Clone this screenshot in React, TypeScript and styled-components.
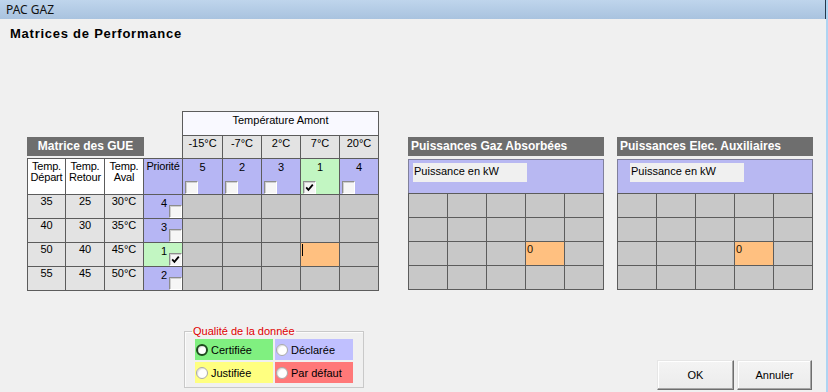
import { Fragment } from 'react';
import styled, { createGlobalStyle } from 'styled-components';

const GlobalStyle = createGlobalStyle`
  html, body {
    margin: 0;
    padding: 0;
    background: #f0f0f0;
  }
  body {
    font-family: 'Liberation Sans', Arial, sans-serif;
    font-size: 11px;
    color: #000;
  }
`;

const tones = {
  white: '#ffffff',
  pale: '#f9f9ff',
  light: '#e3e3e3',
  gray: '#c8c8c8',
  blue: '#b6b6f4',
  green: '#c2f6c2',
  orange: '#ffc080',
};
type Tone = keyof typeof tones;

const quality = {
  green: '#80f080',
  blue: '#c0c0ff',
  yellow: '#ffff80',
  red: '#ff7878',
};

const gueRows = [
  { dep: '35', ret: '25', aval: '30°C', prio: 4 },
  { dep: '40', ret: '30', aval: '35°C', prio: 3 },
  { dep: '50', ret: '40', aval: '45°C', prio: 1, checked: true },
  { dep: '55', ret: '45', aval: '50°C', prio: 2 },
];

const temps = [
  { label: '-15°C', prio: 5 },
  { label: '-7°C', prio: 2 },
  { label: '2°C', prio: 3 },
  { label: '7°C', prio: 1, checked: true },
  { label: '20°C', prio: 4 },
];

const Window = styled.div`
  box-sizing: border-box;
  width: 828px;
  height: 392px;
  display: flex;
  flex-direction: column;
  border-right: 2px solid #aed4f2;
  overflow: hidden;
`;

const TitleBar = styled.div`
  flex: none;
  height: 19px;
  padding-left: 6px;
  background: linear-gradient(#bfd5ec, #a9c3df);
  border-right: 1px solid #26384a;
  font-family: 'Noto Sans', 'Open Sans', sans-serif;
  font-size: 12px;
  line-height: 19px;
  color: #111;
`;

const Heading = styled.h1`
  margin: 0;
  padding: 7px 0 0 10px;
  font-size: 13px;
  line-height: 16px;
  font-weight: bold;
  letter-spacing: 0.75px;
`;

const Board = styled.div`
  display: flex;
  align-items: flex-start;
  height: 180px;
  margin-top: 69px;
  padding-left: 27px;
`;

const Block = styled.div<{ $top?: number; $left?: number }>`
  display: flex;
  flex-direction: column;
  margin-top: ${(p) => p.$top ?? 0}px;
  margin-left: ${(p) => p.$left ?? 0}px;
`;

const Banner = styled.div<{ $width?: number; $gap: number; $center?: boolean }>`
  box-sizing: border-box;
  height: 19px;
  width: ${(p) => (p.$width ? `${p.$width}px` : 'auto')};
  margin-bottom: ${(p) => p.$gap}px;
  padding-left: ${(p) => (p.$center ? 0 : 3)}px;
  background: #6e6e6e;
  color: #fff;
  font-size: 12px;
  font-weight: bold;
  line-height: 19px;
  text-align: ${(p) => (p.$center ? 'center' : 'left')};
  white-space: nowrap;
`;

const Grid = styled.div<{ $cols: string; $rows: string; $open?: boolean }>`
  display: grid;
  grid-template-columns: ${(p) => p.$cols};
  grid-template-rows: ${(p) => p.$rows};
  gap: 1px;
  padding: ${(p) => (p.$open ? '1px 0 1px 1px' : '1px')};
  background: #5c5c5c;
`;

const Cell = styled.div<{ $tone?: Tone }>`
  background: ${(p) => tones[p.$tone ?? 'gray']};
  text-align: center;
  line-height: 12px;
  overflow: hidden;
  white-space: nowrap;
`;

const HeadCell = styled(Cell)`
  padding-top: 2px;
  line-height: 11px;
  letter-spacing: -0.2px;
  white-space: normal;
`;

const TempCell = styled(Cell)`
  padding-top: 1px;
`;

const TitleCell = styled(Cell)`
  grid-column: 1 / -1;
  padding-top: 2px;
`;

const RowPriority = styled(Cell)`
  display: flex;
  justify-content: flex-end;
  gap: 2px;
`;

const PriorityNum = styled.span`
  align-self: flex-start;
  margin-top: 2px;
`;

const ColPriority = styled(Cell)`
  display: flex;
  flex-direction: column;
  align-items: center;
  justify-content: space-between;
  padding-top: 2px;
  box-sizing: border-box;
`;

const Box = styled.span<{ $side: 'left' | 'right' }>`
  box-sizing: border-box;
  flex: none;
  display: flex;
  align-items: center;
  justify-content: center;
  width: 13px;
  height: 13px;
  align-self: ${(p) => (p.$side === 'left' ? 'flex-start' : 'flex-end')};
  margin-left: ${(p) => (p.$side === 'left' ? 2 : 0)}px;
  background: #f6f6f6;
  border: 1px solid;
  border-color: #8c8c8c #ffffff #ffffff #8c8c8c;
  box-shadow: inset 1px 1px #cfcfcf;
`;

const Caret = styled.span`
  display: block;
  width: 1px;
  height: 12px;
  margin: 1px 0 0 1px;
  background: #000;
`;

const ValueCell = styled(Cell)`
  padding: 1px 0 0 1px;
  text-align: left;
  color: #2a1200;
`;

const InfoBox = styled.div<{ $inset: number }>`
  box-sizing: border-box;
  height: 34px;
  padding: 3px 0 0 ${(p) => p.$inset}px;
  border: 1px solid #80809c;
  border-bottom: none;
  background: #b8b8f2;
`;

const UnitLabel = styled.div`
  box-sizing: border-box;
  width: 114px;
  height: 19px;
  padding: 2px 0 0 1px;
  background: #f0f0f0;
  line-height: 12px;
`;

const Footer = styled.div`
  display: flex;
  align-items: flex-start;
  margin-top: 34px;
  padding: 0 14px 0 184px;
`;

const QualityGroup = styled.fieldset`
  box-sizing: border-box;
  width: 180px;
  min-inline-size: auto;
  margin: 0;
  padding: 1px 10px 4px 10px;
  border: 1px solid #c9c9c9;
  box-shadow: inset 1px 1px #fbfbfb;
`;

const QualityLegend = styled.legend`
  margin-left: -3px;
  padding: 0 1px;
  color: #e00000;
  font-size: 11px;
  line-height: 13px;
`;

const QualityGrid = styled.div`
  display: grid;
  grid-template-columns: 78px 78px;
  grid-auto-rows: 21px;
  gap: 2px;
`;

const QualityOption = styled.label<{ $bg: string }>`
  display: flex;
  align-items: center;
  gap: 3px;
  padding-left: 1px;
  background: ${(p) => p.$bg};
  line-height: 12px;
`;

const Radio = styled.span<{ $ring?: boolean }>`
  box-sizing: border-box;
  width: 12px;
  height: 12px;
  border-radius: 50%;
  background: #fff;
  border: ${(p) => (p.$ring ? '2px solid #1f4a1f' : '1px solid #a9a9a9')};
  box-shadow: inset 1px 1px 1px rgba(0, 0, 0, 0.12);
`;

const Actions = styled.div`
  display: flex;
  gap: 3px;
  margin: 35px 0 0 auto;
`;

const Button = styled.button<{ $width: number }>`
  width: ${(p) => p.$width}px;
  height: 30px;
  padding: 0;
  font-family: 'Liberation Sans', Arial, sans-serif;
  font-size: 11px;
  color: #000;
  background: linear-gradient(#f4f4f4, #ebebeb);
  border: 1px solid;
  border-color: #e6e6e6 #6e6e6e #6e6e6e #e6e6e6;
  box-shadow: inset -1px -1px #a6a6a6, inset 1px 1px #ffffff;
`;

const Check = () => (
  <svg width="9" height="9" viewBox="0 0 9 9">
    <path d="M1.2 4.4 L3.4 6.8 L7.8 1.6" fill="none" stroke="#000" strokeWidth="1.8" />
  </svg>
);

const CheckBox = ({ side, checked }: { side: 'left' | 'right'; checked?: boolean }) => (
  <Box $side={side}>{checked && <Check />}</Box>
);

const PowerPanel = ({ title, left, inset }: { title: string; left: number; inset: number }) => (
  <Block $top={26} $left={left}>
    <Banner $gap={3}>{title}</Banner>
    <InfoBox $inset={inset}>
      <UnitLabel>Puissance en kW</UnitLabel>
    </InfoBox>
    <Grid $cols="repeat(5, 38px)" $rows="repeat(4, 23px)">
      {Array.from({ length: 20 }, (_, i) =>
        i === 13 ? (
          <ValueCell key={i} $tone="orange">
            0
          </ValueCell>
        ) : (
          <Cell key={i} />
        ),
      )}
    </Grid>
  </Block>
);

export default function App() {
  return (
    <>
      <GlobalStyle />
      <Window>
        <TitleBar>PAC GAZ</TitleBar>
        <Heading>Matrices de Performance</Heading>

        <Board>
          <Block $top={26}>
            <Banner $width={117} $gap={2} $center>
              Matrice des GUE
            </Banner>
            <Grid $cols="37px 38px 38px 38px" $rows="35px repeat(4, 23px)" $open>
              <HeadCell $tone="white">Temp. Départ</HeadCell>
              <HeadCell $tone="white">Temp. Retour</HeadCell>
              <HeadCell $tone="white">Temp. Aval</HeadCell>
              <HeadCell $tone="blue">Priorité</HeadCell>
              {gueRows.map((r) => (
                <Fragment key={r.dep}>
                  <Cell $tone="light">{r.dep}</Cell>
                  <Cell $tone="light">{r.ret}</Cell>
                  <Cell $tone="light">{r.aval}</Cell>
                  <RowPriority $tone={r.checked ? 'green' : 'blue'}>
                    <PriorityNum>{r.prio}</PriorityNum>
                    <CheckBox side="right" checked={r.checked} />
                  </RowPriority>
                </Fragment>
              ))}
            </Grid>
          </Block>

          <Block>
            <Grid $cols="39px 38px 38px 38px 38px" $rows="23px 22px 35px repeat(4, 23px)">
              <TitleCell $tone="pale">Température Amont</TitleCell>
              {temps.map((t) => (
                <TempCell key={t.label} $tone="light">
                  {t.label}
                </TempCell>
              ))}
              {temps.map((t) => (
                <ColPriority key={`p${t.label}`} $tone={t.checked ? 'green' : 'blue'}>
                  <span>{t.prio}</span>
                  <CheckBox side="left" checked={t.checked} />
                </ColPriority>
              ))}
              {Array.from({ length: 20 }, (_, i) =>
                i === 13 ? (
                  <Cell key={i} $tone="orange">
                    <Caret />
                  </Cell>
                ) : (
                  <Cell key={i} />
                ),
              )}
            </Grid>
          </Block>

          <PowerPanel title="Puissances Gaz Absorbées" left={29} inset={4} />
          <PowerPanel title="Puissances Elec. Auxiliaires" left={13} inset={12} />
        </Board>

        <Footer>
          <QualityGroup>
            <QualityLegend>Qualité de la donnée</QualityLegend>
            <QualityGrid>
              <QualityOption $bg={quality.green}>
                <Radio $ring />
                Certifiée
              </QualityOption>
              <QualityOption $bg={quality.blue}>
                <Radio />
                Déclarée
              </QualityOption>
              <QualityOption $bg={quality.yellow}>
                <Radio />
                Justifiée
              </QualityOption>
              <QualityOption $bg={quality.red}>
                <Radio />
                Par défaut
              </QualityOption>
            </QualityGrid>
          </QualityGroup>
          <Actions>
            <Button $width={77}>OK</Button>
            <Button $width={75}>Annuler</Button>
          </Actions>
        </Footer>
      </Window>
    </>
  );
}
